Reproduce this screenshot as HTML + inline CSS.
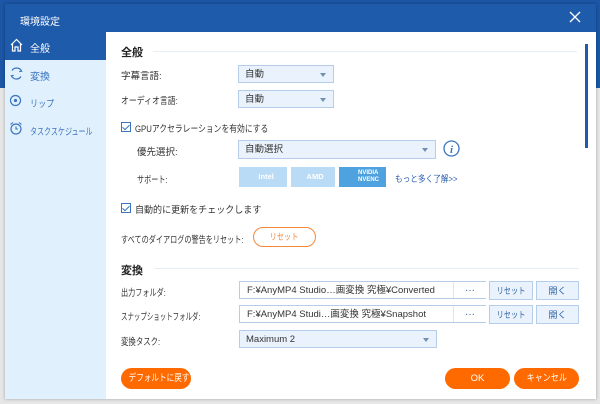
<!DOCTYPE html><html><head><meta charset="utf-8"><style>
*{box-sizing:border-box;margin:0;padding:0}
body{width:600px;height:404px;background:#e6e6e6;position:relative;overflow:hidden;font-family:"Liberation Sans","Noto Sans CJK JP",sans-serif;font-size:9.5px;color:#333}
.a{position:absolute;white-space:nowrap}
.s{display:inline-block;transform-origin:left center;white-space:nowrap}
.dd{position:absolute;background:#eaf3fd;border:1px solid #b5cde8;height:18px;padding-left:6px;line-height:18px;font-size:9.5px}
.dd:after{content:"";position:absolute;right:7px;top:7px;border:3.5px solid transparent;border-top:4px solid #6f8fb5}
.lbl{position:absolute;font-size:9.5px;white-space:nowrap}
.cb{position:absolute;width:10px;height:10px;border:1px solid #3c74c0;background:#fff}
.cb:after{content:"";position:absolute;left:2px;top:0px;width:3px;height:6px;border:solid #3c74c0;border-width:0 1.5px 1.5px 0;transform:rotate(45deg)}
.btn{position:absolute;background:#eaf3fd;border:1px solid #b5cde8;height:19px;text-align:center;line-height:18px;font-size:9px;color:#2c5f9e;white-space:nowrap}
.or{position:absolute;background:#ff6a00;color:#fff;border-radius:11px;height:21px;line-height:21px;text-align:center;font-size:9.5px;white-space:nowrap}
.hline{position:absolute;height:1px;background:#e3eef9}
.path{position:absolute;width:247px;height:18px;border:1px solid #b5cde8;background:#fff;font-size:9.5px;line-height:18px;padding-left:7px;overflow:hidden;white-space:nowrap}
.dots{position:absolute;width:33px;height:16px;border-left:1px solid #dbe5f0;background:#fff;text-align:center;line-height:18px;color:#2c5f9e;font-size:10px}
</style></head><body>
<div class="a" style="left:0;top:0;width:600px;height:88px;background:#1c56a5"></div>
<div class="a" style="left:5px;top:4px;width:591px;height:395px;background:#fff;box-shadow:0 0 3px rgba(0,0,0,.3)"></div>
<div class="a" style="left:5px;top:4px;width:591px;height:28px;background:#1f5bab"></div>
<div class="a" style="left:20px;top:13px;color:#fff;font-size:10px">環境設定</div>
<svg class="a" style="left:569px;top:11px" width="12" height="12"><path d="M1 1 L11 11 M11 1 L1 11" stroke="#fff" stroke-width="1.3"/></svg>
<div class="a" style="left:5px;top:32px;width:101px;height:367px;background:#e0f0fd"></div>
<div class="a" style="left:5px;top:32px;width:101px;height:28px;background:#1f5bab"></div>
<svg class="a" style="left:9px;top:37px" width="15" height="16" viewBox="0 0 15 16"><path d="M2 8 L7.5 2.5 L13 8 M3.5 7 V14 H6 V10 H9 V14 H11.5 V7" fill="none" stroke="#fff" stroke-width="1.2"/></svg>
<div class="a" style="left:30px;top:40px;color:#fff;font-size:10px">全般</div>
<svg class="a" style="left:9px;top:66px" width="15" height="15" viewBox="0 0 15 15"><path d="M3 4.5 A5.5 5.5 0 0 1 12.5 5 M12 10.5 A5.5 5.5 0 0 1 2.5 10" fill="none" stroke="#3c74c0" stroke-width="1.2"/><path d="M11 3 L12.7 5.3 L10.2 5.6 M4 12 L2.3 9.7 L4.8 9.4" fill="none" stroke="#3c74c0" stroke-width="1"/></svg>
<div class="a" style="left:30px;top:68px;color:#3c74c0;font-size:10px">変換</div>
<svg class="a" style="left:9px;top:94px" width="13" height="13"><circle cx="6.5" cy="6.5" r="5" fill="none" stroke="#3c74c0" stroke-width="1.2"/><circle cx="6.5" cy="6.5" r="1.6" fill="#3c74c0"/></svg>
<div class="a" style="left:30px;top:96px;color:#3c74c0"><span class="s" style="transform:scaleX(.85)">リップ</span></div>
<svg class="a" style="left:9px;top:121px" width="14" height="15"><circle cx="7" cy="8" r="5" fill="none" stroke="#3c74c0" stroke-width="1.2"/><path d="M7 5.5 V8 H9 M1.5 3.5 L4 1.5 M12.5 3.5 L10 1.5" fill="none" stroke="#3c74c0" stroke-width="1.1"/></svg>
<div class="a" style="left:30px;top:124px;color:#3c74c0"><span class="s" style="transform:scaleX(.74)">タスクスケジュール</span></div>
<div class="a" style="left:585px;top:44px;width:3px;height:104px;background:#1f5bab"></div>
<div class="a" style="left:121px;top:44px;font-size:11px;font-weight:bold;color:#222">全般</div>
<div class="hline" style="left:153px;top:51px;width:424px"></div>
<div class="lbl" style="left:121px;top:68px">字幕言語:</div>
<div class="dd" style="left:238px;top:65px;width:96px">自動</div>
<div class="lbl" style="left:121px;top:93px"><span class="s" style="transform:scaleX(.83)">オーディオ言語:</span></div>
<div class="dd" style="left:238px;top:90px;width:96px">自動</div>
<div class="cb" style="left:121px;top:122px"></div>
<div class="lbl" style="left:135px;top:121px"><span class="s" style="transform:scaleX(.82)">GPUアクセラレーションを有効にする</span></div>
<div class="lbl" style="left:137px;top:144px">優先選択:</div>
<div class="dd" style="left:238px;top:140px;width:198px;height:19px">自動選択</div>
<svg class="a" style="left:443px;top:140px" width="17" height="17"><circle cx="8.5" cy="8.5" r="7.5" fill="none" stroke="#3c74c0" stroke-width="1.3"/><text x="8.5" y="13" text-anchor="middle" font-family="Liberation Serif" font-style="italic" font-weight="bold" font-size="11" fill="#3c74c0">i</text></svg>
<div class="lbl" style="left:137px;top:172px"><span class="s" style="transform:scaleX(.75)">サポート:</span></div>
<div class="a" style="left:239px;top:167px;width:48px;height:20px;background:#b9dbf5;color:#fff;font-size:7.5px;line-height:20px;text-align:center;font-weight:bold">&nbsp;&nbsp;&nbsp;Intel</div>
<div class="a" style="left:291px;top:167px;width:44px;height:20px;background:#b9dbf5;color:#fff;font-size:7.5px;line-height:20px;text-align:center;font-weight:bold">&nbsp;&nbsp;AMD</div>
<div class="a" style="left:339px;top:167px;width:47px;height:20px;background:#4fa2e0;color:#fff;font-size:6px;line-height:7px;padding:3px 0 0 19px;font-weight:bold">NVIDIA<br>NVENC</div>
<div class="a" style="left:395px;top:172px;color:#2c5fb0;text-decoration:underline;font-size:9px"><span class="s" style="transform:scaleX(.85)">もっと多く了解&gt;&gt;</span></div>
<div class="cb" style="left:121px;top:203px"></div>
<div class="lbl" style="left:135px;top:202px"><span class="s" style="transform:scaleX(.95)">自動的に更新をチェックします</span></div>
<div class="lbl" style="left:121px;top:232px"><span class="s" style="transform:scaleX(.75)">すべてのダイアログの警告をリセット:</span></div>
<div class="a" style="left:253px;top:227px;width:63px;height:20px;border:1px solid #f6883a;border-radius:10px;color:#f6883a;font-size:9px;text-align:center;line-height:18px"><span class="s" style="transform:scaleX(.8);transform-origin:center">リセット</span></div>
<div class="a" style="left:121px;top:262px;font-size:11px;font-weight:bold;color:#222">変換</div>
<div class="hline" style="left:154px;top:268px;width:425px"></div>
<div class="lbl" style="left:121px;top:285px"><span class="s" style="transform:scaleX(.75)">出力フォルダ:</span></div>
<div class="path" style="left:239px;top:281px">F:¥AnyMP4 Studio…画変換 究極¥Converted</div>
<div class="dots" style="left:453px;top:282px">···</div>
<div class="btn" style="left:489px;top:281px;width:44px"><span class="s" style="transform:scaleX(.8);transform-origin:center">リセット</span></div>
<div class="btn" style="left:536px;top:281px;width:43px">開く</div>
<div class="lbl" style="left:121px;top:309px"><span class="s" style="transform:scaleX(.68)">スナップショットフォルダ:</span></div>
<div class="path" style="left:239px;top:305px">F:¥AnyMP4 Studi…画変換 究極¥Snapshot</div>
<div class="dots" style="left:453px;top:306px">···</div>
<div class="btn" style="left:489px;top:305px;width:44px"><span class="s" style="transform:scaleX(.8);transform-origin:center">リセット</span></div>
<div class="btn" style="left:536px;top:305px;width:43px">開く</div>
<div class="lbl" style="left:121px;top:334px"><span class="s" style="transform:scaleX(.78)">変換タスク:</span></div>
<div class="dd" style="left:239px;top:330px;width:198px;height:18px">Maximum 2</div>
<div class="or" style="left:121px;top:368px;width:70px"><span class="s" style="transform:scaleX(.8);transform-origin:center">デフォルトに戻す</span></div>
<div class="or" style="left:445px;top:368px;width:65px">OK</div>
<div class="or" style="left:514px;top:368px;width:65px"><span class="s" style="transform:scaleX(.85);transform-origin:center">キャンセル</span></div>
</body></html>
